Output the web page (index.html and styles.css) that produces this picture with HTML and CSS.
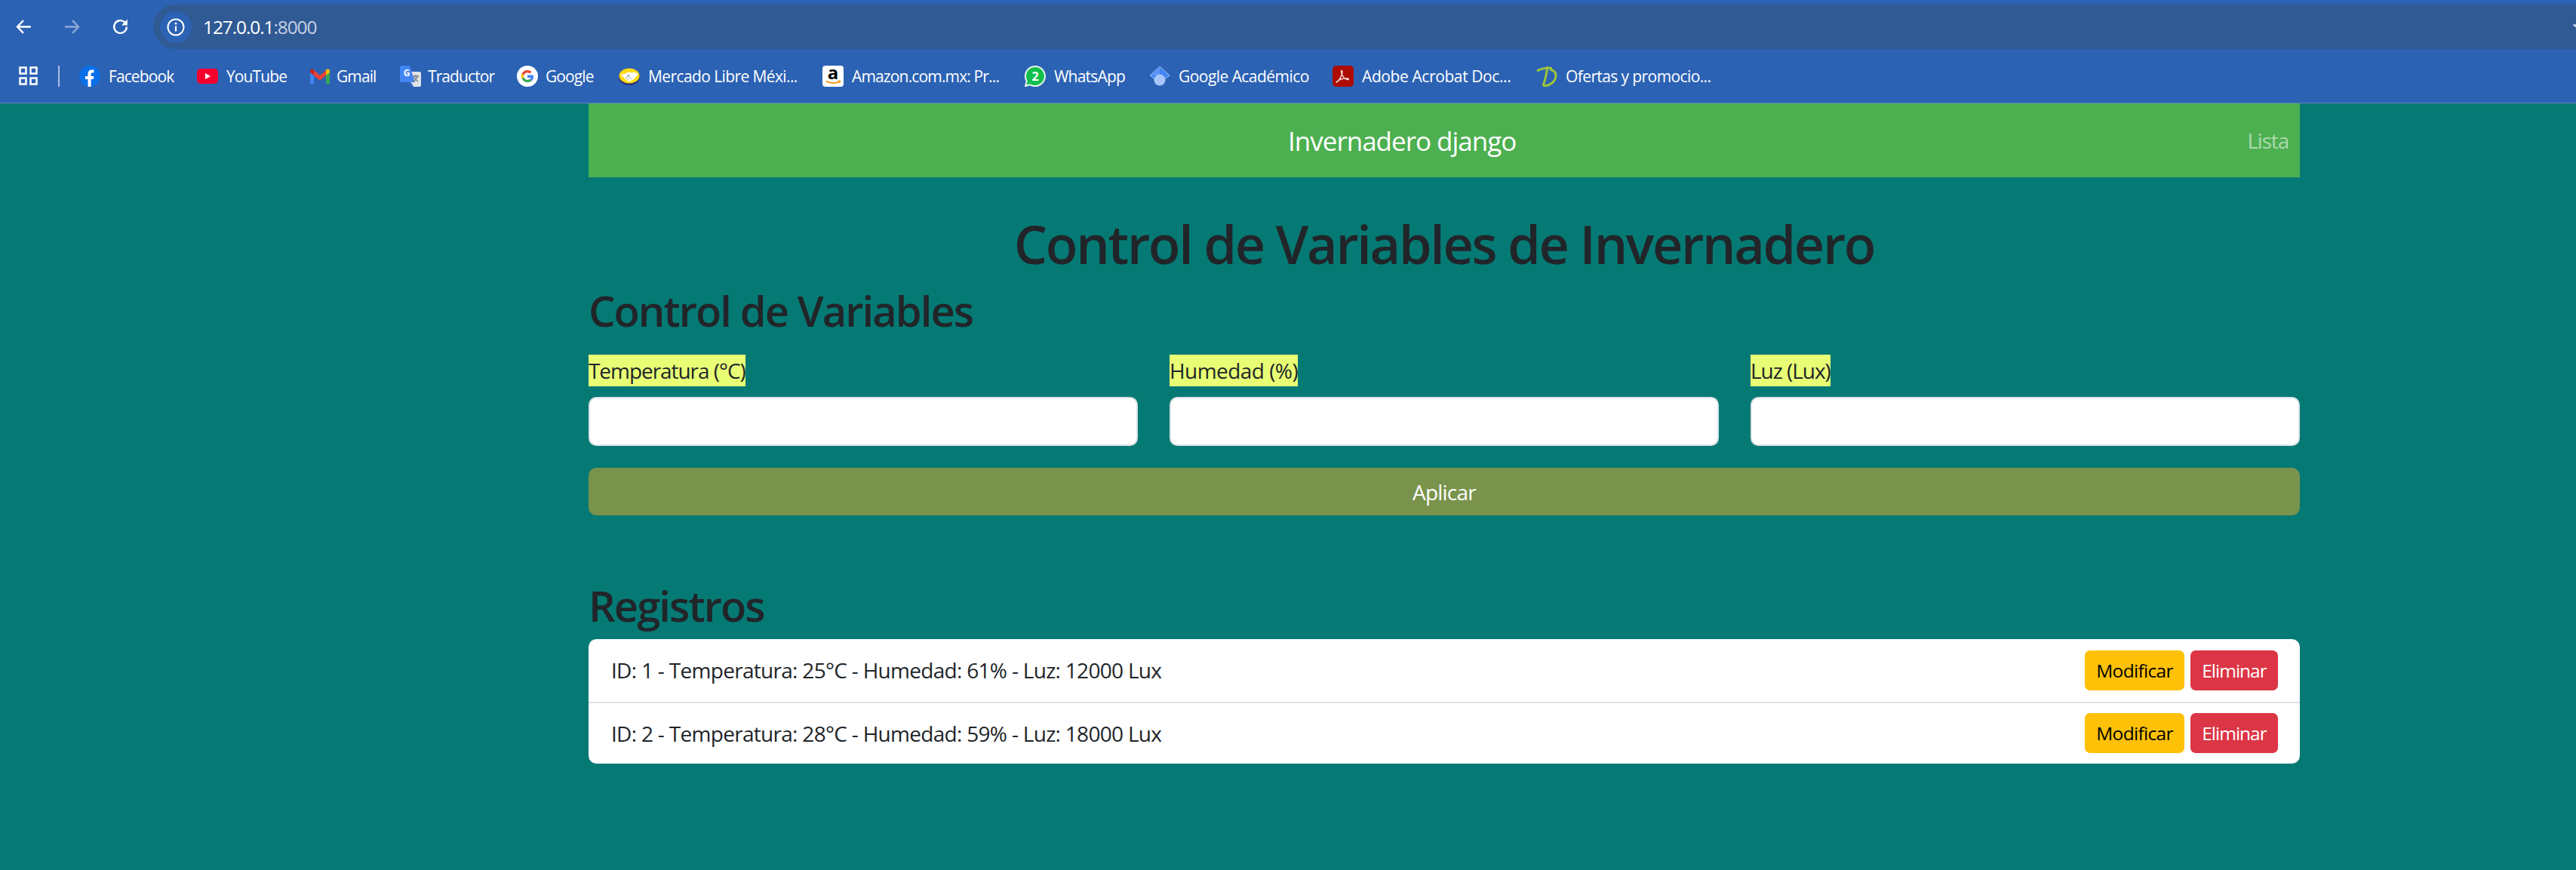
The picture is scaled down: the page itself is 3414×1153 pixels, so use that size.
FILE: index.html
```html
<!DOCTYPE html>
<html lang="es">
<head>
<meta charset="utf-8">
<title>Invernadero django</title>
<link rel="stylesheet" href="styles.css">
</head>
<body>
<header class="chrome">
  <div class="toolbar">
    <div class="nav-icons">
      <svg class="tb-icon" viewBox="0 0 24 24"><path d="M21 12H4M11.5 4 3.8 12l7.700 8" fill="none" stroke="#fff" stroke-width="2.2"/></svg>
      <svg class="tb-icon" viewBox="0 0 24 24"><path d="M3 12h17M12.500 4l7.700 8-7.700 8" fill="none" stroke="#8ea9d6" stroke-width="2.2"/></svg>
      <svg class="tb-icon" viewBox="0 0 24 24"><path d="M20 12a8 8 0 1 1-2.600-5.900L20 8.500" fill="none" stroke="#fff" stroke-width="2.300"/><path d="M21 2.500V10h-7.500z" fill="#fff"/></svg>
    </div>
    <div class="omnibox">
      <span class="site-chip">
        <svg class="info" viewBox="0 0 24 24"><circle cx="12" cy="12" r="10.500" fill="none" stroke="#fff" stroke-width="2"/><path d="M12 10.500v7" stroke="#fff" stroke-width="2.200"/><circle cx="12" cy="7.200" r="1.400" fill="#fff"/></svg>
      </span>
      <span class="url">127.0.0.1<span class="url-port">:8000</span></span>
      <svg class="star" viewBox="0 0 24 24"><path d="M12 2l3 7 7.500.6-5.700 4.900 1.700 7.300L12 18l-6.500 3.800 1.700-7.300L1.500 9.600 9 9z" fill="none" stroke="#c5d1e4" stroke-width="2"/></svg>
    </div>
  </div>
  <nav class="bookmarks">
    <svg class="apps" viewBox="0 0 25 25"><g fill="none" stroke="#fff" stroke-width="2.500"><rect x="1.500" y="1.500" width="8" height="8"/><rect x="15.500" y="1.500" width="8" height="8"/><rect x="1.500" y="15.500" width="8" height="8"/><rect x="15.500" y="15.500" width="8" height="8"/></g></svg>
    <span class="bm-sep"></span>
    <a class="bm bm-facebook"><svg class="bm-ico" viewBox="0 0 28 28"><circle cx="14" cy="14" r="14" fill="#0b6fe8"/><path d="M11.500 28V18H8v-4h3.500v-3c0-3.600 2.100-5.500 5.300-5.500 1.200 0 2.700.2 2.700.2v3.500h-1.700c-1.700 0-2.200 1-2.200 2.100V14h3.800l-.6 4h-3.200v10z" fill="#fff"/></svg><span>Facebook</span></a>
    <a class="bm bm-youtube"><svg class="bm-ico" viewBox="0 0 28 28"><rect x="0" y="4" width="28" height="20" rx="5" fill="#f5002e"/><path d="M11 10l7 4-7 4z" fill="#fff"/></svg><span>YouTube</span></a>
    <a class="bm bm-gmail"><svg class="bm-ico" viewBox="0 0 28 28"><path d="M1 7v17h5V11z" fill="#4285f4"/><path d="M22 11v13h5V7z" fill="#34a853"/><path d="M6 6l8 7 8-7v7l-8 6.500L6 13z" fill="#ea4335"/><path d="M1 7c0-2.500 3-3.500 5-1.500V13L1 9z" fill="#c5221f"/><path d="M27 7c0-2.500-3-3.500-5-1.500V13l5-4z" fill="#fbbc04"/></svg><span>Gmail</span></a>
    <a class="bm bm-traductor"><svg class="bm-ico" viewBox="0 0 28 28"><path d="M12 8h14a2 2 0 0 1 2 2v16a2 2 0 0 1-2 2H15z" fill="#dfe3e8"/><path d="M2 0h11l7 22H2a2 2 0 0 1-2-2V2a2 2 0 0 1 2-2z" fill="#4285f4"/><path d="M15 22l-2 6h5z" fill="#3367c9"/><text x="9" y="14" class="ico-g">G</text><path d="M17 14h8M21 12v2M23 14c-.8 4-3 6-6 7M19 15c1 3 3 5 5 6" fill="none" stroke="#7a7f85" stroke-width="1.300"/></svg><span>Traductor</span></a>
    <a class="bm bm-google"><svg class="bm-ico" viewBox="0 0 28 28"><circle cx="14" cy="14" r="14" fill="#fff"/><path d="M22 14.300c0-.6-.1-1.200-.2-1.800H14v3.400h4.500c-.2 1.100-.8 2-1.700 2.600l2.700 2.100c1.600-1.500 2.500-3.600 2.500-6.300z" fill="#4285f4"/><path d="M14 22c2.300 0 4.100-.8 5.500-2.100L16.800 18c-.7.500-1.700.8-2.800.8-2.200 0-4-1.500-4.600-3.400l-2.800 2.100C8 20.200 10.800 22 14 22z" fill="#34a853"/><path d="M9.400 15.400c-.3-.9-.3-1.900 0-2.800l-2.800-2.100c-1 2-1 4.900 0 7z" fill="#fbbc04"/><path d="M14 9.200c1.200 0 2.300.4 3.200 1.200l2.400-2.400C18.100 6.700 16.200 6 14 6c-3.200 0-6 1.800-7.400 4.500l2.800 2.100c.6-1.900 2.400-3.400 4.600-3.400z" fill="#ea4335"/></svg><span>Google</span></a>
    <a class="bm bm-mercado"><svg class="bm-ico" viewBox="0 0 28 28"><ellipse cx="14" cy="15" rx="14" ry="11" fill="#2d3277"/><ellipse cx="14" cy="13.500" rx="13.500" ry="10" fill="#ffdb15"/><path d="M2 11c4 2 7-1 10-2 2-.6 5 1 7 0 2-.8 4 .5 7 2l-6 7-5 3-3-.5-4-3.500z" fill="#fff"/><path d="M9 15l4 4M12 13l5 5M14 11l-3 3c1 1 2 1 3 0l1-1" fill="none" stroke="#9aa3b8" stroke-width="1"/></svg><span>Mercado Libre Méxi...</span></a>
    <a class="bm bm-amazon"><svg class="bm-ico" viewBox="0 0 28 28"><rect width="28" height="28" rx="4" fill="#fff"/><text x="14" y="18" class="ico-a">a</text><path d="M5 20.500c5 3.500 13 3.500 18 .5" fill="none" stroke="#f79400" stroke-width="1.800"/><path d="M20 19.500l4.500.2-1.500 3.500z" fill="#f79400"/></svg><span>Amazon.com.mx: Pr...</span></a>
    <a class="bm bm-whatsapp"><svg class="bm-ico" viewBox="0 0 28 28"><path d="M14 1a13 13 0 1 1-6.500 24.300L1 27l1.800-6.300A13 13 0 0 1 14 1z" fill="#12bf4d" stroke="#e8f5ea" stroke-width="2"/><text x="14" y="20" class="ico-w">2</text></svg><span>WhatsApp</span></a>
    <a class="bm bm-scholar"><svg class="bm-ico" viewBox="0 0 28 28"><path d="M14 1 1 13l13 10 13-10z" fill="#4285f4" stroke="#a8c0ee" stroke-width="1"/><path d="M14 1v12H1z" fill="#5b95f5"/><circle cx="14" cy="19" r="7.500" fill="#a8c7fa"/></svg><span>Google Académico</span></a>
    <a class="bm bm-adobe"><svg class="bm-ico" viewBox="0 0 28 28"><rect width="28" height="28" rx="5" fill="#ad0b00"/><path d="M5 22c3-1.500 6-6 7.500-11 .6-2 .5-4.500-.3-4.500-1 0-.8 3 1 6.500 2 3.600 5 6 7.500 5.500 1.200-.2.500-1.700-1.500-1.700-4 0-9 1.200-12 3.200-2 1.300-2.600 2.700-1.700 2z" fill="none" stroke="#f2d5d2" stroke-width="1.500"/></svg><span>Adobe Acrobat Doc...</span></a>
    <a class="bm bm-ofertas"><svg class="bm-ico" viewBox="0 0 28 28"><path d="M1 7c5-3 12-4 20-3.500M15 1c-1 9-3 17-6 26M9 27c9 0 17-6 17-14 0-4-3-7-8-8" fill="none" stroke="#9cc43c" stroke-width="3"/></svg><span>Ofertas y promocio...</span></a>
  </nav>
</header>

<div class="page">
  <nav class="site-nav">
    <a class="brand">Invernadero django</a>
    <a class="nav-link">Lista</a>
  </nav>
  <h1 class="title">Control de Variables de Invernadero</h1>
  <h2 class="section-title">Control de Variables</h2>
  <form class="control-form">
    <div class="field-grid">
      <div class="field">
        <label class="field-label">Temperatura (°C)</label>
        <input class="field-input" type="text">
      </div>
      <div class="field">
        <label class="field-label label-wide">Humedad (%)</label>
        <input class="field-input" type="text">
      </div>
      <div class="field">
        <label class="field-label">Luz (Lux)</label>
        <input class="field-input" type="text">
      </div>
    </div>
    <button class="apply" type="button">Aplicar</button>
  </form>
  <h2 class="section-title records-title">Registros</h2>
  <ul class="records">
    <li class="record">
      <span>ID: 1 - Temperatura: 25°C - Humedad: 61% - Luz: 12000 Lux</span>
      <div class="actions"><button class="btn btn-edit" type="button">Modificar</button><button class="btn btn-del" type="button">Eliminar</button></div>
    </li>
    <li class="record">
      <span>ID: 2 - Temperatura: 28°C - Humedad: 59% - Luz: 18000 Lux</span>
      <div class="actions"><button class="btn btn-edit" type="button">Modificar</button><button class="btn btn-del" type="button">Eliminar</button></div>
    </li>
  </ul>
</div>
</body>
</html>
```
FILE: styles.css
```css
* { box-sizing: border-box; }
html, body { margin: 0; padding: 0; }
body {
  height: 1153px;
  overflow: hidden;
  background: #057a75;
  color: #212529;
  font-family: "Open Sans", "Noto Sans", sans-serif;
  font-size: 28px;
}
a { text-decoration: none; }

/* browser chrome */
.chrome {
  height: 137px;
  background: #2c62b4;
  border-bottom: 1px solid #5f84c4;
  padding-top: 6px;
  color: #fff;
}
.toolbar { display: flex; height: 59px; }
.nav-icons {
  width: 203px;
  display: flex;
  align-items: center;
  padding-left: 19px;
  gap: 39px;
}
.tb-icon { width: 25px; height: 25px; }
.omnibox {
  flex: 1;
  display: flex;
  align-items: center;
  gap: 15px;
  padding-left: 9px;
  background: #305a94;
  border-radius: 30px 0 0 30px;
  overflow: hidden;
}
.site-chip {
  width: 42px;
  height: 42px;
  border-radius: 50%;
  background: #2c62b4;
  display: flex;
  align-items: center;
  justify-content: center;
}
.info { width: 24px; height: 24px; }
.url { font-size: 24.5px; letter-spacing: -1.1px; }
.url-port { color: #c5d1e4; }
.star { width: 26px; height: 26px; flex: none; margin-left: auto; margin-right: -22px; }

.bookmarks {
  height: 71px;
  display: flex;
  align-items: center;
  padding-left: 25px;
  font-size: 21px;
  letter-spacing: -0.9px;
}
.apps { width: 25px; height: 25px; flex: none; }
.bm-sep {
  width: 2px;
  height: 28px;
  margin: 0 26px 0 27px;
  background: #a9bfe0;
}
.bm { display: flex; align-items: center; gap: 11px; color: #fff; flex: none; white-space: nowrap; }
.bm-ico { width: 28px; height: 28px; flex: none; }
.bm-facebook { width: 156px; }
.bm-youtube { width: 149px; }
.bm-gmail { width: 120px; gap: 8px; }
.bm-traductor { width: 155px; gap: 9px; }
.bm-google { width: 135px; gap: 10px; }
.bm-mercado { width: 270px; letter-spacing: -0.6px; }
.bm-amazon { width: 268px; letter-spacing: -0.85px; }
.bm-whatsapp { width: 165px; letter-spacing: -0.8px; }
.bm-scholar { width: 243px; letter-spacing: -0.55px; }
.bm-adobe { width: 270px; letter-spacing: -0.4px; }
.bm-ofertas { letter-spacing: -0.6px; }
.ico-g { font-size: 12px; font-weight: 700; fill: #fff; text-anchor: middle; letter-spacing: 0; }
.ico-a { font-size: 24px; font-weight: 700; fill: #000; text-anchor: middle; letter-spacing: 0; }
.ico-w { font-size: 16px; font-weight: 700; fill: #fff; text-anchor: middle; letter-spacing: 0; }

/* page */
.page { width: 2268px; margin-left: 780px; }
.site-nav {
  height: 98px;
  background: #4caf50;
  display: flex;
  align-items: center;
  justify-content: space-between;
  padding: 0 15px 0 927px;
}
.brand { color: #fff; font-size: 35px; letter-spacing: -1px; }
.nav-link { color: rgba(255,255,255,.55); font-size: 28px; letter-spacing: -1.2px; }

.title {
  margin: 46px 0 13px;
  font-size: 70px;
  line-height: 84px;
  font-weight: 600;
  text-align: center;
  letter-spacing: -2.27px;
}
.section-title {
  margin: 0 0 0;
  font-size: 56px;
  line-height: 67px;
  font-weight: 600;
  letter-spacing: -1.9px;
}
.control-form { margin-top: 25px; }
.field-grid { display: grid; grid-template-columns: repeat(3, 1fr); gap: 42px; }
.field { display: flex; flex-direction: column; align-items: flex-start; }
.field-label {
  height: 42px;
  line-height: 42px;
  background: #e8ff75;
  margin-bottom: 14px;
  letter-spacing: -1.05px;
}
.label-wide { letter-spacing: -0.55px; }
.field-input {
  width: 100%;
  height: 65px;
  border: 2px solid #dee2e6;
  border-radius: 10.5px;
  background: #fff;
}
.apply {
  display: block;
  width: 100%;
  height: 63px;
  margin-top: 29px;
  border: 0;
  border-radius: 10.5px;
  background: #7a934c;
  color: #fff;
  font: inherit;
  letter-spacing: -0.8px;
}
.records-title { margin-top: 86px; }
.records {
  list-style: none;
  margin: 11px 0 0;
  padding: 0;
  background: #fff;
  border-radius: 10.5px;
  overflow: hidden;
}
.record {
  height: 82.500px;
  display: flex;
  align-items: center;
  justify-content: space-between;
  padding: 0 29px 0 30px;
  letter-spacing: -0.7px;
}
.record + .record { border-top: 2px solid #dee2e6; }
.actions { display: flex; gap: 8px; }
.btn {
  height: 53px;
  border: 0;
  border-radius: 7px;
  font: inherit;
  font-size: 24.5px;
  letter-spacing: -0.7px;
}
.btn-edit { width: 132px; background: #ffc107; color: #000; }
.btn-del { width: 116px; background: #dc3545; color: #fff; letter-spacing: -1px; }
```
